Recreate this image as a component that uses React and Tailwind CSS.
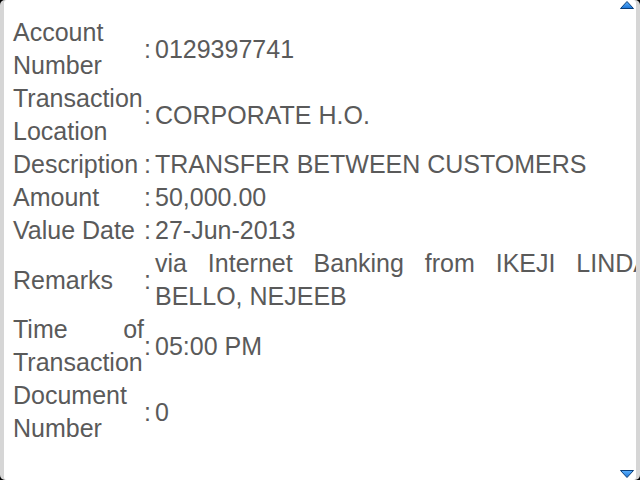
import React from "react";

const rows = [
  { label: "Account Number", value: "0129397741" },
  { label: "Transaction Location", value: "CORPORATE H.O." },
  { label: "Description", value: "TRANSFER BETWEEN CUSTOMERS" },
  { label: "Amount", value: "50,000.00" },
  { label: "Value Date", value: "27-Jun-2013" },
  { label: "Remarks", value: "via Internet Banking from IKEJI LINDA BELLO, NEJEEB" },
  { label: "Time of Transaction", value: "05:00 PM" },
  { label: "Document Number", value: "0" },
];

const ScrollArrow = ({ down }) => (
  <svg width="14" height="8" viewBox="0 0 14 8" className="block">
    <defs>
      <linearGradient id={down ? "gd" : "gu"} x1="0" y1="0" x2="0" y2="1">
        <stop offset="0" stopColor="#5cb2ff" />
        <stop offset="1" stopColor="#1a73d6" />
      </linearGradient>
    </defs>
    <polygon
      points={down ? "0.5,0.5 13.5,0.5 7,7.5" : "7,0.5 13.5,7.5 0.5,7.5"}
      fill={`url(#${down ? "gd" : "gu"})`}
      stroke="#0b3f7a"
      strokeWidth="1"
    />
  </svg>
);

export default function App() {
  return (
    <div className="w-[640px] h-[480px] bg-black overflow-hidden">
      <div className="h-full rounded-[5px] bg-[#d6d6d6] px-[4px]">
        <div className="relative h-full bg-white overflow-hidden rounded-[3px]">
          {/* scroll indicators */}
          <div className="absolute top-[1px] right-[2px]">
            <ScrollArrow />
          </div>
          <div className="absolute bottom-[2px] right-[2px]">
            <ScrollArrow down />
          </div>

          <div
            className="pt-[16px] pl-[9px] grid grid-cols-[131px_11px_495px] items-center text-[25px] leading-[33px] text-[#5a5a5a]"
            style={{ fontFamily: '"Liberation Sans", Arial, sans-serif' }}
          >
            {rows.map((row) => (
              <React.Fragment key={row.label}>
                <div className="text-justify">{row.label}</div>
                <div>:</div>
                <div className="text-justify">{row.value}</div>
              </React.Fragment>
            ))}
          </div>
        </div>
      </div>
    </div>
  );
}
